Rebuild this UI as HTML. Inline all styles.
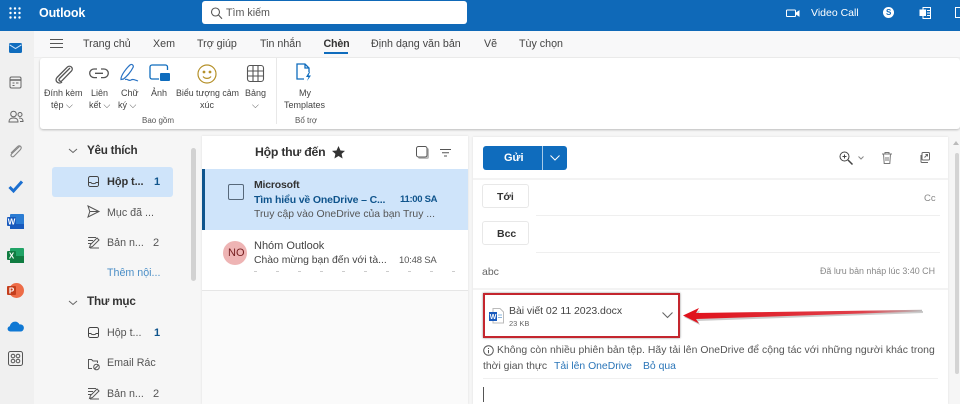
<!DOCTYPE html>
<html lang="vi"><head><meta charset="utf-8"><title>Outlook</title>
<style>
*{box-sizing:border-box}
html,body{margin:0;padding:0;width:960px;height:404px;overflow:hidden;background:#f6f6f6}
body{position:relative;font-family:"Liberation Sans","Noto Sans CJK SC",sans-serif;color:#333}
#w{position:absolute;left:0;top:0;width:960px;height:404px;overflow:hidden;filter:blur(.3px)}
.a{position:absolute}
.t{position:absolute;white-space:nowrap;line-height:1}
svg{position:absolute;overflow:visible}
</style></head><body><div id="w">
<!-- header -->
<div class="a" style="left:0;top:0;width:960px;height:31px;background:#0f69b8"></div>
<svg style="left:9px;top:7px" width="12" height="12" fill="#fff"><circle cx="1.5" cy="1.5" r="1.2"/><circle cx="6" cy="1.5" r="1.2"/><circle cx="10.5" cy="1.5" r="1.2"/><circle cx="1.5" cy="6" r="1.2"/><circle cx="6" cy="6" r="1.2"/><circle cx="10.5" cy="6" r="1.2"/><circle cx="1.5" cy="10.5" r="1.2"/><circle cx="6" cy="10.5" r="1.2"/><circle cx="10.5" cy="10.5" r="1.2"/></svg>
<div class="t" style="left:39px;top:7px;font-size:12.5px;font-weight:bold;color:#fff;letter-spacing:-.15px">Outlook</div>
<div class="a" style="left:202px;top:1px;width:265px;height:23px;background:#fff;border-radius:3px"></div>
<svg style="left:210px;top:7px" width="13" height="13" fill="none" stroke="#555" stroke-width="1.1"><circle cx="5.500" cy="5" r="4"/><path d="M8.500 8l3.500 3.800"/></svg>
<div class="t" style="left:226px;top:8px;font-size:10.700px;color:#555">Tìm kiếm</div>
<svg style="left:786px;top:9px" width="14" height="9" fill="none" stroke="#fff" stroke-width="1"><rect x=".5" y="1" width="9" height="6.500" rx=".8"/><path d="M10 4l3-2v5l-3-2" fill="#fff"/></svg>
<div class="t" style="left:811px;top:8px;font-size:10.500px;color:#fff">Video Call</div>
<div class="a" style="left:883px;top:7px;width:11px;height:11px;border-radius:50%;background:#fff"></div>
<div class="t" style="left:886px;top:8.500px;font-size:8px;font-weight:bold;color:#0f69b8">S</div>
<svg style="left:919px;top:7px" width="12" height="12"><rect x="4" y=".5" width="7.500" height="11" fill="none" stroke="#fff"/><rect x=".5" y="2.500" width="6.500" height="6.500" fill="#fff"/><path d="M8 3.500h3M8 6h3M8 8.500h3" stroke="#fff"/></svg>
<svg style="left:955px;top:7px" width="12" height="12" fill="none" stroke="#fff"><rect x=".5" y=".5" width="10" height="10"/></svg>
<!-- left rail -->
<div class="a" style="left:0;top:31px;width:34px;height:373px;background:#f0f0f0"></div>
<svg style="left:9px;top:43px" width="13" height="10"><rect width="13" height="10" rx="1.500" fill="#0f6cbd"/><path d="M.5 1.800l6 3.700 6-3.700" fill="none" stroke="#cfe4fa" stroke-width="1"/></svg>
<svg style="left:9px;top:76px" width="13" height="13" fill="none" stroke="#666" stroke-width="1"><rect x="1" y="1" width="11" height="11" rx="1.500"/><path d="M1 4h11" stroke-width="1.500"/><path d="M3.500 7h2M7 7h2.500M3.500 9.500h2"/></svg>
<svg style="left:8px;top:110px" width="16" height="13" fill="none" stroke="#666" stroke-width="1"><circle cx="5.500" cy="4" r="2.800"/><circle cx="12" cy="4.500" r="2"/><path d="M1 12c0-3 1.500-4 4.500-4s4.500 1 4.500 4zM11 8c3 0 4 1 4 3.500h-3"/></svg>
<svg style="left:9px;top:144px" width="13" height="15" fill="none" stroke="#888" stroke-width="1.100"><path d="M10.500 2.500L2.500 10c-1.500 1.800 .8 3.800 2.500 2.200l6.500-6.700c2-2.500-1-5-3-2.800L2 9"/></svg>
<svg style="left:8px;top:180px" width="16" height="13" fill="none" stroke="#1b6fd0" stroke-width="3"><path d="M1.500 7l4 4 8.500-9.500"/></svg>
<svg style="left:7px;top:214px" width="17" height="15"><rect x="3" y="0" width="14" height="15" rx="1" fill="#2b7cd3"/><rect x="3" y="10" width="14" height="5" fill="#185abd"/><rect x="0" y="3" width="9" height="9" rx="1" fill="#185abd"/><text x="4.500" y="10.500" text-anchor="middle" font-size="8" font-weight="bold" fill="#fff" font-family="Liberation Sans">W</text></svg>
<svg style="left:7px;top:248px" width="17" height="15"><rect x="3" y="0" width="14" height="15" rx="1" fill="#21a366"/><rect x="3" y="8" width="14" height="7" fill="#107c41"/><rect x="0" y="3" width="9" height="9" rx="1" fill="#107c41"/><text x="4.500" y="10.500" text-anchor="middle" font-size="8" font-weight="bold" fill="#fff" font-family="Liberation Sans">X</text></svg>
<svg style="left:7px;top:283px" width="17" height="15"><circle cx="9.500" cy="7.500" r="7.500" fill="#ed6c47"/><rect x="0" y="3" width="9" height="9" rx="1" fill="#c43e1c"/><text x="4.500" y="10.500" text-anchor="middle" font-size="8" font-weight="bold" fill="#fff" font-family="Liberation Sans">P</text></svg>
<svg style="left:7px;top:320px" width="17" height="12"><path d="M3.500 11.500C0 11.500-.5 7 2.800 6.300 3.800 1 10.500 0 12.500 4.500c3-.5 5 2 4.200 4.500-.4 1.500-1.700 2.500-3 2.500z" fill="#0f78d4"/></svg>
<svg style="left:8px;top:351px" width="15" height="15" fill="none" stroke="#555" stroke-width="1"><rect x=".5" y=".5" width="14" height="14" rx="2"/><circle cx="5" cy="5" r="1.800"/><circle cx="10" cy="5" r="1.800"/><circle cx="5" cy="10" r="1.800"/><circle cx="10" cy="10" r="1.800"/></svg>
<!-- tab bar -->
<div class="a" style="left:34px;top:31px;width:926px;height:27px;background:#f8f8f9;border-bottom:1px solid #efefef"></div>
<svg style="left:50px;top:39px" width="13" height="10" stroke="#555" stroke-width="1"><path d="M0 .5h13M0 4.500h13M0 8.500h13"/></svg>
<div class="t" style="left:83px;top:39px;font-size:10.700px;color:#444">Trang chủ</div>
<div class="t" style="left:153px;top:39px;font-size:10.700px;color:#444">Xem</div>
<div class="t" style="left:197px;top:39px;font-size:10.700px;color:#444">Trợ giúp</div>
<div class="t" style="left:260px;top:39px;font-size:10.700px;color:#444">Tin nhắn</div>
<div class="t" style="left:323.500px;top:39px;font-size:10.700px;font-weight:bold;color:#333;letter-spacing:-.2px">Chèn</div>
<div class="a" style="left:324px;top:52px;width:24px;height:2px;background:#0f6cbd"></div>
<div class="t" style="left:371px;top:39px;font-size:10.700px;color:#444">Định dạng văn bản</div>
<div class="t" style="left:484px;top:39px;font-size:10.700px;color:#444">Vẽ</div>
<div class="t" style="left:519px;top:39px;font-size:10.700px;color:#444">Tùy chọn</div>
<!-- ribbon -->
<div class="a" style="left:40px;top:58px;width:920px;height:71px;background:#fff;border-radius:3px;box-shadow:0 1px 2px #bbb"></div>
<div class="a" style="left:276px;top:58px;width:1px;height:66px;background:#e8e8e8"></div>
<svg style="left:55px;top:65px" width="18" height="18" fill="none" stroke="#555" stroke-width="1.300"><path d="M15 3L4.500 13.500c-1.500 1.700 .8 3.800 2.500 2.200L16.500 6c2.500-3-1.500-6.500-4.300-3.800L2 12.500c-3 3.300 1.800 7.500 5 4.500"/></svg>
<svg style="left:89px;top:68px" width="20" height="11" fill="none" stroke="#555" stroke-width="1.300"><path d="M8 1H5a4.300 4.300 0 000 8.600h3M12 1h3a4.300 4.300 0 010 8.600h-3M6 5.300h8"/></svg>
<svg style="left:119px;top:64px" width="21" height="20" fill="none" stroke="#2a73c4" stroke-width="1.200"><path d="M2 15.500c-.5-4 6-12 9-14.500 2-1.500 4 .5 3 2.500-2 4-6 9-9.500 11.500zM6 15.500c3-1 3.500 2 6 .5 1.500-1 3-.5 7 1"/></svg>
<svg style="left:149px;top:64px" width="22" height="19"><path d="M18.500 6V3a2 2 0 00-2-2H3a2 2 0 00-2 2v10a2 2 0 002 2h7" fill="none" stroke="#0f6cbd" stroke-width="1.300"/><rect x="11" y="9" width="10" height="8" rx="1" fill="#0f6cbd"/></svg>
<svg style="left:197px;top:64px" width="20" height="20" fill="none" stroke="#b5912a" stroke-width="1.200"><circle cx="10" cy="10" r="9"/><circle cx="7" cy="8" r=".8" fill="#b5912a"/><circle cx="13" cy="8" r=".8" fill="#b5912a"/><path d="M6 12.500c2 2.500 6 2.500 8 0"/></svg>
<svg style="left:247px;top:65px" width="17" height="17" fill="none" stroke="#555" stroke-width="1.100"><rect x=".5" y=".5" width="16" height="16" rx="2.500"/><path d="M6 .5v16M11 .5v16M.5 6h16M.5 11h16"/></svg>
<div class="t" style="left:44px;top:89px;font-size:9px;color:#444">Đính kèm</div>
<div class="t" style="left:51px;top:101px;font-size:9px;color:#444">tệp ⌵</div>
<div class="t" style="left:91px;top:89px;font-size:9px;color:#444">Liên</div>
<div class="t" style="left:89px;top:101px;font-size:9px;color:#444">kết ⌵</div>
<div class="t" style="left:121px;top:89px;font-size:9px;color:#444">Chữ</div>
<div class="t" style="left:118px;top:101px;font-size:9px;color:#444">ký ⌵</div>
<div class="t" style="left:151px;top:89px;font-size:9px;color:#444">Ảnh</div>
<div class="t" style="left:176px;top:89px;font-size:8.800px;color:#444">Biểu tượng cảm</div>
<div class="t" style="left:200px;top:101px;font-size:9px;color:#444">xúc</div>
<div class="t" style="left:245px;top:89px;font-size:9px;color:#444">Bảng</div>
<div class="t" style="left:252px;top:101px;font-size:9px;color:#444">⌵</div>
<div class="t" style="left:142px;top:117px;font-size:8px;color:#555">Bao gồm</div>
<svg style="left:295px;top:63px" width="18" height="20" fill="none" stroke="#0f6cbd" stroke-width="1.300"><path d="M9 16H2V1h8l4 4v4M10 1v4h4"/><path d="M14 9l-3 5h2.500l-1.500 4 4-5.500h-2.500l1.500-3.500z" fill="#0f6cbd" stroke="none"/></svg>
<div class="t" style="left:299px;top:89px;font-size:9px;color:#444">My</div>
<div class="t" style="left:284px;top:101px;font-size:9px;color:#444">Templates</div>
<div class="t" style="left:295px;top:117px;font-size:8px;color:#555">Bổ trợ</div>
<!-- folders -->
<svg style="left:68px;top:148px" width="10" height="6" fill="none" stroke="#666"><path d="M1 1l4 3.500L9 1"/></svg>
<div class="t" style="left:87px;top:145px;font-size:11.700px;font-weight:bold;color:#333;letter-spacing:-.25px">Yêu thích</div>
<div class="a" style="left:52px;top:167px;width:121px;height:30px;background:#cfe4fa;border-radius:3px"></div>
<svg style="left:88px;top:176px" width="11" height="11" fill="none" stroke="#444"><rect x=".5" y=".5" width="10" height="10" rx="1.800"/><path d="M.5 6.500h2.500c.5 1.500 4.500 1.500 5 0h2.500"/></svg>
<div class="t" style="left:107px;top:177px;font-size:11px;font-weight:bold;color:#333;letter-spacing:-.1px">Hộp t...</div>
<div class="t" style="left:154px;top:177px;font-size:11px;font-weight:bold;color:#0f548c">1</div>
<svg style="left:87px;top:205px" width="13" height="13" fill="none" stroke="#555"><path d="M1 1l11 5.500L1 12l1.800-5.500zM2.800 6.500H12"/></svg>
<div class="t" style="left:107px;top:207.500px;font-size:10.700px;color:#555">Mục đã ...</div>
<svg style="left:87px;top:236px" width="13" height="13" fill="none" stroke="#555"><path d="M1 1.500h8M1 4.500h5M1 7.500h3M2.500 11.500l1-3L10 2l2 2-6.500 6.500zM3 12h9"/></svg>
<div class="t" style="left:107px;top:238px;font-size:10.700px;color:#555">Bản n...</div>
<div class="t" style="left:153px;top:238px;font-size:11px;color:#555">2</div>
<div class="t" style="left:107px;top:268px;font-size:10.700px;color:#4c8fc7">Thêm nội...</div>
<svg style="left:68px;top:300px" width="10" height="6" fill="none" stroke="#666"><path d="M1 1l4 3.500L9 1"/></svg>
<div class="t" style="left:87px;top:295.500px;font-size:11.700px;font-weight:bold;color:#333;letter-spacing:-.2px">Thư mục</div>
<svg style="left:88px;top:327px" width="11" height="11" fill="none" stroke="#444"><rect x=".5" y=".5" width="10" height="10" rx="1.800"/><path d="M.5 6.500h2.500c.5 1.500 4.500 1.500 5 0h2.500"/></svg>
<div class="t" style="left:107px;top:328px;font-size:10.700px;color:#555">Hộp t...</div>
<div class="t" style="left:154px;top:328px;font-size:11px;font-weight:bold;color:#0f548c">1</div>
<svg style="left:87px;top:358px" width="13" height="12" fill="none" stroke="#555"><path d="M5 10.500H1.500v-9h3l1.500 1.500h4.500v2"/><circle cx="9.500" cy="9" r="2.800"/><path d="M7.500 11l4-4"/></svg>
<div class="t" style="left:107px;top:358px;font-size:10.700px;color:#555">Email Rác</div>
<svg style="left:87px;top:387px" width="13" height="13" fill="none" stroke="#555"><path d="M1 1.500h8M1 4.500h5M1 7.500h3M2.500 11.500l1-3L10 2l2 2-6.500 6.500zM3 12h9"/></svg>
<div class="t" style="left:107px;top:388.500px;font-size:10.700px;color:#555">Bản n...</div>
<div class="t" style="left:153px;top:388.500px;font-size:11px;color:#555">2</div>
<div class="a" style="left:191px;top:148px;width:5px;height:133px;background:#d2d2d2;border-radius:3px"></div>
<!-- list -->
<div class="a" style="left:202px;top:136px;width:266px;height:268px;background:#fafafa;box-shadow:0 0 2px #ddd"></div>
<div class="a" style="left:202px;top:136px;width:266px;height:33px;background:#fff"></div>
<div class="t" style="left:255px;top:146px;font-size:12.300px;font-weight:bold;color:#333;letter-spacing:-.25px">Hộp thư đến</div>
<svg style="left:332px;top:146px" width="13" height="13"><path d="M6.500 0l2 4.500 4.500.4-3.400 3 1 4.600-4.100-2.500-4.100 2.500 1-4.600L0 4.900l4.500-.4z" fill="#333"/></svg>
<svg style="left:416px;top:146px" width="13" height="13"><rect x="2" y="2" width="11" height="11" rx="2" fill="#bbb"/><rect x=".5" y=".5" width="10.500" height="10.500" rx="2" fill="#fff" stroke="#555"/></svg>
<svg style="left:440px;top:149px" width="11" height="8" stroke="#555"><path d="M0 .5h11M2 3.800h7M4 7h3"/></svg>
<div class="a" style="left:202px;top:169px;width:266px;height:61px;background:#cfe4fa"></div>
<div class="a" style="left:202px;top:169px;width:3px;height:61px;background:#0f548c"></div>
<div class="a" style="left:228px;top:184px;width:16px;height:16px;border:1px solid #57687a;border-radius:2px"></div>
<div class="t" style="left:254px;top:179.500px;font-size:10.500px;font-weight:bold;color:#333;letter-spacing:-.2px">Microsoft</div>
<div class="t" style="left:254px;top:194.500px;font-size:10.500px;font-weight:bold;color:#0f548c;letter-spacing:-.15px">Tìm hiểu về OneDrive – C...</div>
<div class="t" style="left:400px;top:195px;font-size:9.500px;font-weight:bold;color:#0f548c;letter-spacing:-.3px">11:00 SA</div>
<div class="t" style="left:254px;top:209.500px;font-size:10.400px;color:#555;letter-spacing:0">Truy cập vào OneDrive của bạn Truy ...</div>
<div class="a" style="left:202px;top:230px;width:266px;height:61px;background:#fff;border-bottom:1px solid #e6e6e6"></div>
<div class="a" style="left:223px;top:241px;width:24px;height:24px;border-radius:50%;background:#eeb4b4"></div>
<div class="t" style="left:228px;top:248px;font-size:11px;color:#751d1f">NO</div>
<div class="t" style="left:254px;top:240.500px;font-size:11px;color:#444">Nhóm Outlook</div>
<div class="t" style="left:254px;top:255.500px;font-size:10.400px;color:#444">Chào mừng bạn đến với tà...</div>
<div class="t" style="left:399px;top:256px;font-size:9.500px;color:#555;letter-spacing:-.2px">10:48 SA</div>
<div class="a" style="left:254px;top:271px;width:210px;height:1px;background:repeating-linear-gradient(90deg,#ccc 0 3px,transparent 3px 22px)"></div>
<!-- compose -->
<div class="a" style="left:473px;top:137px;width:475px;height:267px;background:#fff;box-shadow:0 0 2px #ddd"></div>
<div class="a" style="left:473px;top:178px;width:475px;height:2px;background:#f3f3f3"></div>
<div class="a" style="left:483px;top:146px;width:84px;height:24px;background:#0f6cbd;border-radius:3px"></div>
<div class="a" style="left:542px;top:146px;width:1px;height:24px;background:#a8cbe8"></div>
<div class="t" style="left:504px;top:152.500px;font-size:11px;font-weight:bold;color:#fff">Gửi</div>
<svg style="left:550px;top:155px" width="10" height="6" fill="none" stroke="#fff"><path d="M.5 .5L5 5 9.500 .5"/></svg>
<svg style="left:839px;top:151px" width="14" height="14" fill="none" stroke="#444" stroke-width="1"><circle cx="5.500" cy="5.500" r="4.500"/><path d="M3.500 5.500h4M5.500 3.500v4"/><path d="M9 9l4.500 4.500" stroke-width="1.500"/></svg>
<svg style="left:858px;top:156px" width="6" height="4" fill="none" stroke="#888"><path d="M.5 .5L3 3 5.500 .5"/></svg>
<svg style="left:882px;top:152px" width="10" height="12" fill="none" stroke="#777" stroke-width="1"><path d="M0 2h10M3 2V.5h4V2M1.500 2l.7 9.500h5.600L8.500 2M4 5v4M6 5v4"/></svg>
<svg style="left:920px;top:152px" width="10" height="11" fill="none" stroke="#666"><rect x="2" y=".5" width="7.500" height="7.500" rx="1"/><path d="M1 3v6.500c0 .5 .3 1 1 1h6M4.500 5.500L7.500 2.500M5.500 2.500h2v2"/></svg>
<div class="a" style="left:482px;top:184px;width:47px;height:24px;background:#fff;border:1px solid #e8e8e8;border-radius:3px"></div>
<div class="t" style="left:497px;top:192px;font-size:10.500px;font-weight:bold;color:#333">Tới</div>
<div class="a" style="left:482px;top:221px;width:47px;height:24px;background:#fff;border:1px solid #e8e8e8;border-radius:3px"></div>
<div class="t" style="left:497px;top:229px;font-size:10.500px;font-weight:bold;color:#333">Bcc</div>
<div class="t" style="left:924px;top:193.500px;font-size:9.500px;color:#888">Cc</div>
<div class="a" style="left:536px;top:215px;width:404px;height:1px;background:#efefef"></div>
<div class="a" style="left:536px;top:252px;width:404px;height:1px;background:#efefef"></div>
<div class="t" style="left:482px;top:267px;font-size:10.500px;color:#666">abc</div>
<div class="t" style="right:25px;top:266.500px;font-size:8.900px;color:#888">Đã lưu bản nháp lúc 3:40 CH</div>
<div class="a" style="left:473px;top:288px;width:475px;height:2px;background:#f3f3f3"></div>
<svg style="left:489px;top:308px" width="15" height="16"><path d="M4 .5h7l3.500 3.500v11H4z" fill="#fff" stroke="#bbb"/><rect x="0" y="4" width="8" height="9" fill="#185abd"/><text x="4" y="11" text-anchor="middle" font-size="7" font-weight="bold" fill="#fff" font-family="Liberation Sans">W</text><path d="M9 7h4M9 9.500h4" stroke="#8ab4dc"/></svg>
<div class="t" style="left:509px;top:306px;font-size:10.500px;color:#444;letter-spacing:-.05px">Bài viết 02 11 2023.docx</div>
<div class="t" style="left:509px;top:319.500px;font-size:7.500px;color:#666">23 KB</div>
<svg style="left:662px;top:312px" width="11" height="7" fill="none" stroke="#666" stroke-width="1.100"><path d="M.5 .5L5.500 5.500 10.500 .5"/></svg>
<div class="a" style="left:483px;top:293px;width:197px;height:45px;border:2px solid #c4262e;box-shadow:0 0 2px #888"></div>
<svg style="left:682px;top:305px" width="242" height="20"><defs><linearGradient id="g" x1="0" x2="1" y1="0" y2="0"><stop offset="0" stop-color="#e0101a"/><stop offset=".75" stop-color="#e0404a"/><stop offset="1" stop-color="#bbb"/></linearGradient></defs><path d="M2 12l16-6.500-2 4L241 6v2L16 16l2 4z" fill="#999" opacity=".5"/><path d="M1 10.500L17 3l-3 5L240 4.800v1.700L14 14l3 4.500z" fill="url(#g)"/></svg>
<svg style="left:483px;top:345px" width="11" height="11" fill="none" stroke="#555"><circle cx="5.500" cy="5.500" r="4.800"/><path d="M5.500 5v3.200M5.500 3v1"/></svg>
<div class="t" style="left:497px;top:345.500px;font-size:10.400px;color:#555;letter-spacing:.04px">Không còn nhiều phiên bản tệp. Hãy tải lên OneDrive để cộng tác với những người khác trong</div>
<div class="t" style="left:483px;top:361.500px;font-size:10.400px;color:#555">thời gian thực</div>
<div class="t" style="left:554px;top:361.500px;font-size:10.400px;color:#2a75b8">Tải lên OneDrive</div>
<div class="t" style="left:643px;top:361.500px;font-size:10.400px;color:#2a75b8">Bỏ qua</div>
<div class="a" style="left:483px;top:378px;width:455px;height:1px;background:#f0f0f0"></div>
<div class="a" style="left:483px;top:387px;width:1px;height:15px;background:#555"></div>
<!-- scrollbar -->
<svg style="left:953px;top:141px" width="6" height="4" fill="#bbb"><path d="M0 4l3-4 3 4z"/></svg>
<div class="a" style="left:955px;top:153px;width:4px;height:221px;background:#d4d4d4;border-radius:2px"></div>
</div></body></html>
